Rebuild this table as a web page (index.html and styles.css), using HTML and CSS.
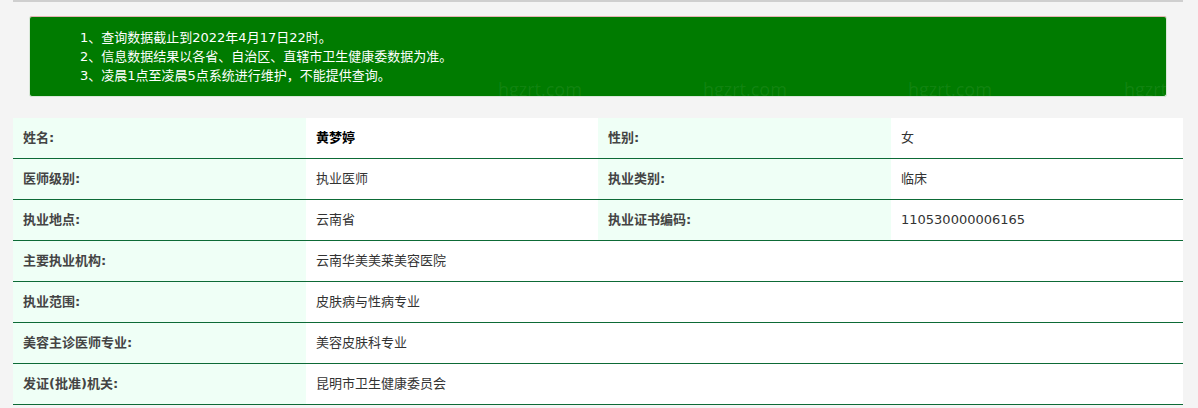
FILE: index.html
```html
<!DOCTYPE html>
<html lang="zh-CN">
<head>
<meta charset="utf-8">
<title>医师查询</title>
<link rel="stylesheet" href="styles.css">
</head>
<body>
<div class="page">
  <div class="topline"></div>
  <div class="notice">
    <p>1、查询数据截止到2022年4月17日22时。</p>
    <p>2、信息数据结果以各省、自治区、直辖市卫生健康委数据为准。</p>
    <p>3、凌晨1点至凌晨5点系统进行维护，不能提供查询。</p>
    <span class="wm wm1">hgzrt.com</span>
    <span class="wm wm2">hgzrt.com</span>
    <span class="wm wm3">hgzrt.com</span>
    <span class="wm wm4">hgzrt.com</span>
  </div>
  <div class="info">
    <div class="row">
      <div class="cell label">姓名:</div>
      <div class="cell value name">黄梦婷</div>
      <div class="cell label">性别:</div>
      <div class="cell value">女</div>
    </div>
    <div class="row">
      <div class="cell label">医师级别:</div>
      <div class="cell value">执业医师</div>
      <div class="cell label">执业类别:</div>
      <div class="cell value">临床</div>
    </div>
    <div class="row">
      <div class="cell label">执业地点:</div>
      <div class="cell value">云南省</div>
      <div class="cell label">执业证书编码:</div>
      <div class="cell value">110530000006165</div>
    </div>
    <div class="row">
      <div class="cell label">主要执业机构:</div>
      <div class="cell value wide">云南华美美莱美容医院</div>
    </div>
    <div class="row">
      <div class="cell label">执业范围:</div>
      <div class="cell value wide">皮肤病与性病专业</div>
    </div>
    <div class="row">
      <div class="cell label">美容主诊医师专业:</div>
      <div class="cell value wide">美容皮肤科专业</div>
    </div>
    <div class="row">
      <div class="cell label">发证(批准)机关:</div>
      <div class="cell value wide">昆明市卫生健康委员会</div>
    </div>
  </div>
</div>
</body>
</html>
```

FILE: styles.css
```css
* { box-sizing: border-box; }
html, body {
  margin: 0;
  padding: 0;
  background: #f4f4f4;
  font-family: "DejaVu Sans", "Noto Sans CJK SC", sans-serif;
  font-size: 13px;
  color: #333;
}
.page {
  width: 1170px;
  margin-left: 13px;
}
.topline {
  height: 2px;
  background: #cfcfcf;
}
.notice {
  position: relative;
  overflow: hidden;
  margin: 14px 16px 0 16px;
  background: #007b00;
  border: 1px solid #d8e8d8;
  border-top-color: #e4b4b4;
  border-radius: 3px;
  padding: 11px 0 11px 50px;
  color: #fff;
  height: 81px;
}
.notice p {
  margin: 0;
  line-height: 19px;
}
.wm {
  position: absolute;
  top: 60px;
  font-family: "Open Sans", sans-serif;
  font-size: 18px;
  line-height: 24px;
  color: rgba(255, 255, 255, 0.08);
}
.wm1 { left: 468px; }
.wm2 { left: 673px; }
.wm3 { left: 878px; }
.wm4 { left: 1094px; }
.info {
  margin-top: 21px;
  background: #fff;
}
.row {
  display: grid;
  grid-template-columns: 293px 292px 293px 292px;
  border-bottom: 1px solid #0d6a36;
}
.cell {
  height: 40px;
  line-height: 40px;
  padding-left: 10px;
  white-space: nowrap;
}
.label {
  background: #effff6;
  font-weight: 700;
  color: #444;
}
.value {
  background: #fff;
  color: #333;
}
.value.name {
  font-weight: 700;
  color: #000;
}
.value.wide {
  grid-column: 2 / 5;
}
```
